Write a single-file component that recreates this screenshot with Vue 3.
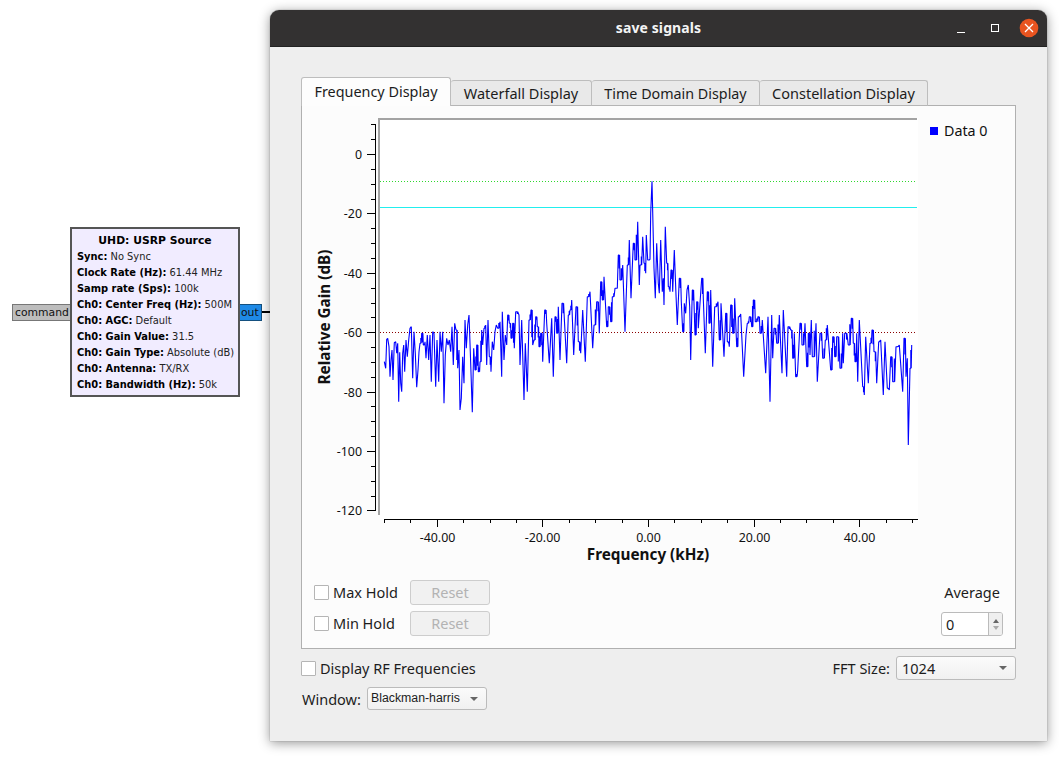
<script setup>
const seg1 = [43,575,47,595,50,508,53,505,57,530,60,620,63,570,66,540,69,630,73,518,77,515,80,550,83,520,86,695,89,547,92,640,95,665,98,550,101,525,104,605,108,510,112,560,116,510,120,475,124,470,128,625,132,485,136,550,140,652,144,600,147,545,150,520,155,490,160,525,165,515,168,565,172,495,176,570,180,495,184,635,188,485,192,490,197,650,201,510,206,635,210,485,214,545,218,485,222,700,226,555,230,505,234,525,238,510,242,545,246,470,250,585,254,460,258,480,263,595,267,540,270,720,274,685,278,560,282,640,285,450,289,535,293,465,297,435,301,545,307,727,311,535,315,600,320,525,325,605,330,575,335,480,338,525,342,475,347,465,350,585,354,450,358,560,363,605,367,515,371,540,375,485,379,465,383,475,390,455,395,620,397,425,402,570,406,495,410,525,413,435,418,460,423,505,428,460,433,535,437,425,447,435,450,585,455,450,462,690,466,520,472,665,477,450,483,420,488,525,492,510,497,440,502,470,507,530,512,490,518,575,524,420,530,460,538,580,545,445,550,620,555,440,560,490,565,410,570,570,576,400,583,445,590,580,595,435,600,420,605,390,611,555,618,410,625,515,632,550,638,420,646,575,652,380,660,365,668,535,672,465,680,395,688,490,692,335,697,390,702,320,710,470,715,410,722,455,727,380,735,355,742,355,745,255,750,330,758,285,765,485,772,285,778,210,783,385,790,220,795,270,803,155,808,345]
const seg2 = [0,285,8,200,12,280,17,310,19,195,23,270,30,268,32,130,36,34,40,205,42,295,46,385,50,220,55,340,58,370,62,210,67,365,70,325,72,405,76,170,80,280,85,350,90,365,93,300,98,365,103,240,108,375,112,465,118,325,124,395,128,485,133,400,137,430,141,360,145,345,149,410,152,570,157,360,162,400,165,495,170,395,175,475,185,325,190,385,196,550,202,365,207,460,212,360,218,590,224,410,234,395,238,510,243,400,252,560,257,430,262,515,268,530,272,405,278,490,284,385,290,530,295,440,302,432,311,620,318,495,322,460,328,440,335,470,340,390,346,455,354,440,360,490,367,450,377,610,384,440,390,695,395,435,398,565,402,475,410,520,418,435,426,610,430,420,440,620,444,470,452,480,458,565,463,490,467,620,473,600,480,460,486,525,495,460,500,590,505,490,510,555,514,450,517,560,528,460,532,635,540,490,548,565,556,510,562,465,572,600,578,500,584,560,590,500,600,595,608,490,610,580,614,490,625,525,634,445,640,520,645,575,650,490,653,635,658,450,668,650,673,675,677,500,685,640,690,520,696,480,702,545,710,640,716,515,722,510,730,675,735,515,742,655,748,660,752,560,758,635,768,530,778,525,788,665,792,505,798,620,802,565,805,825,810,595,815,525]

// Scan-line look: the reference draws roughly one vertical stroke per pixel column.
function toPts(arr, ox) {
  const out = []
  for (let i = 0; i < arr.length; i += 2) {
    const x = ox + arr[i] / 3
    const y = 170 + arr[i + 1] / 3
    out.push(x.toFixed(1) + ',' + y.toFixed(1))
    if (i + 2 < arr.length) {
      const nx = ox + arr[i + 2] / 3
      const ny = 170 + arr[i + 3] / 3
      if (nx - x >= 1.6 && Math.abs(ny - y) < 40) {
        const mid = x + (nx - x) * 0.5
        const f = ((i * 37) % 10) / 10
        const my = y + (ny - y) * (0.3 + 0.6 * f)
        out.push(mid.toFixed(1) + ',' + y.toFixed(1))
        out.push(mid.toFixed(1) + ',' + my.toFixed(1))
        out.push((mid + 0.4).toFixed(1) + ',' + y.toFixed(1))
        out.push(nx.toFixed(1) + ',' + ny.toFixed(1))
      }
    }
  }
  return out
}
const trace = [...toPts(seg1, 370), ...toPts(seg2, 640)].join(' ')

const yOf = db => Math.round(154 - db * 2.97) + 0.5
const xOf = k => Math.round(648 + k * 5.28) + 0.5

const yTicks = []
for (let d = 10; d >= -120; d -= 5) yTicks.push({ y: yOf(d), major: d % 20 === 0 })
const yLabels = [0, -20, -40, -60, -80, -100, -120].map(d => ({ y: yOf(d) + 4.5, t: String(d) }))
const xTicks = []
for (let k = -50; k <= 50; k += 5) xTicks.push({ x: xOf(k), major: k % 20 === 0 })
const xLabels = [-40, -20, 0, 20, 40].map(k => ({ x: xOf(k), t: k.toFixed(2) }))

const props = [
  ['Sync:', 'No Sync'],
  ['Clock Rate (Hz):', '61.44 MHz'],
  ['Samp rate (Sps):', '100k'],
  ['Ch0: Center Freq (Hz):', '500M'],
  ['Ch0: AGC:', 'Default'],
  ['Ch0: Gain Value:', '31.5'],
  ['Ch0: Gain Type:', 'Absolute (dB)'],
  ['Ch0: Antenna:', 'TX/RX'],
  ['Ch0: Bandwidth (Hz):', '50k'],
]
const tabs = ['Frequency Display', 'Waterfall Display', 'Time Domain Display', 'Constellation Display']
</script>

<template>
  <div class="desk">
    <div class="node">
      <div class="port cmd">command</div>
      <div class="block">
        <div class="block-title">UHD: USRP Source</div>
        <div v-for="p in props" :key="p[0]" class="prop"><b>{{ p[0] }}</b> {{ p[1] }}</div>
      </div>
      <div class="port out">out</div>
      <div class="wire"></div>
    </div>

    <div class="window">
      <div class="titlebar">
        <span class="title">save signals</span>
        <div class="ctrls">
          <svg width="90" height="24" viewBox="0 0 90 24">
            <path d="M1 16.5h8" stroke="#fff" stroke-width="1" fill="none" />
            <rect x="35.5" y="8.5" width="7" height="7" stroke="#fff" fill="none" />
            <circle cx="73" cy="12" r="9.3" fill="#e95420" />
            <path d="M69 8l8 8M77 8l-8 8" stroke="#fff" stroke-width="1.3" fill="none" />
          </svg>
        </div>
      </div>

      <div class="body">
        <div class="tabbar">
          <div v-for="(t, i) in tabs" :key="t" class="tab" :class="['t' + i, { active: i === 0 }]">{{ t }}</div>
        </div>
        <div class="pane">
          <svg class="plot" width="712" height="468" viewBox="302 106 712 468">
            <rect x="380" y="118" width="538" height="402" fill="#fff" />
            <rect x="378" y="118" width="2" height="397" fill="#a3a3a3" />
            <rect x="378" y="118" width="539" height="2" fill="#a3a3a3" />
            <g shape-rendering="crispEdges" stroke="#000" stroke-width="1">
              <line x1="375.5" y1="124" x2="375.5" y2="511" />
              <line v-for="t in yTicks" :key="'y' + t.y" :x1="t.major ? 367 : 371" :x2="375" :y1="t.y" :y2="t.y" />
              <line x1="384" y1="519.5" x2="918" y2="519.5" />
              <line v-for="t in xTicks" :key="'x' + t.x" :x1="t.x" :x2="t.x" y1="520" :y2="t.major ? 527 : 523" />
            </g>
            <line x1="380" x2="915" y1="181.5" y2="181.5" stroke="#2fd82f" stroke-dasharray="1 2" shape-rendering="crispEdges" />
            <line x1="380" x2="917" y1="207.5" y2="207.5" stroke="#22eeee" shape-rendering="crispEdges" />
            <line x1="380" x2="915" y1="332.5" y2="332.5" stroke="#8b0000" stroke-dasharray="1 2" shape-rendering="crispEdges" />
            <polyline :points="trace" fill="none" stroke="#0000ff" stroke-width="1.1" stroke-linejoin="bevel" />
            <text v-for="l in yLabels" :key="l.t" class="tick" x="362" :y="l.y" text-anchor="end">{{ l.t }}</text>
            <text v-for="l in xLabels" :key="l.t" class="tick" :x="l.x" y="541.5" text-anchor="middle">{{ l.t }}</text>
            <text class="axis" x="648" y="560" text-anchor="middle">Frequency (kHz)</text>
            <text class="axis" transform="translate(330 317) rotate(-90)" text-anchor="middle">Relative Gain (dB)</text>
            <rect x="930" y="127" width="8" height="8" fill="#0000ff" />
            <text class="legend" x="944" y="136">Data 0</text>
          </svg>

          <div class="controls">
            <div class="holds">
              <div class="hold"><span class="check"></span><span class="hold-label">Max Hold</span><span class="reset">Reset</span></div>
              <div class="hold"><span class="check"></span><span class="hold-label">Min Hold</span><span class="reset">Reset</span></div>
            </div>
            <div class="avg">
              <div class="avg-label">Average</div>
              <div class="spin">
                <span class="spin-val">0</span>
                <span class="spin-btns"><i class="up"></i><i class="down"></i></span>
              </div>
            </div>
          </div>
        </div>

        <div class="row rf">
          <span class="rf-left"><span class="check"></span><span>Display RF Frequencies</span></span>
          <span class="fft">
            <span>FFT Size:</span>
            <span class="combo big">1024<i class="arrow"></i></span>
          </span>
        </div>
        <div class="row win">
          <span class="win-label">Window:</span>
          <span class="combo small">Blackman-harris<i class="arrow"></i></span>
        </div>
      </div>
    </div>
  </div>
</template>

<style>
html, body { margin: 0; background: #fff; }
</style>

<style scoped>
.desk {
  position: relative;
  width: 1059px;
  height: 759px;
  overflow: hidden;
  background: #fff;
  font-family: "Noto Sans", "Open Sans", sans-serif;
  color: #1c1c1c;
}
.node {
  position: absolute;
  left: 12px;
  top: 227px;
  display: flex;
  align-items: center;
  font-family: "DejaVu Sans", sans-serif;
}
.block {
  width: 170px;
  height: 170px;
  box-sizing: border-box;
  border: 2px solid #555;
  background: #f1ecff;
  padding: 4px 0 0 5px;
  font-size: 9.9px;
  line-height: 16px;
  color: #222;
  white-space: nowrap;
}
.block b { color: #000; }
.block-title {
  font-weight: bold;
  text-align: center;
  padding-right: 5px;
  color: #000;
  font-size: 10.8px;
}
.port {
  height: 17px;
  box-sizing: border-box;
  font-size: 10.8px;
  line-height: 15px;
  color: #111;
  border: 1px solid #777;
}
.cmd { width: 58px; background: #bdbdbd; padding-left: 2px; border-right: 0; }
.out { width: 22px; background: #1f8ae6; padding-left: 1px; border-left: 0; border-color: #14507f; }
.wire { width: 10px; height: 2px; background: #000; }

.window {
  position: absolute;
  left: 270px;
  top: 10px;
  width: 777px;
  height: 731px;
  box-sizing: border-box;
  background: #eeeeee;
  border-radius: 9px 9px 0 0;
  box-shadow: 0 2px 12px rgba(0, 0, 0, 0.42), 0 0 1px rgba(0, 0, 0, 0.6);
  display: flex;
  flex-direction: column;
}
.titlebar {
  position: relative;
  height: 37px;
  flex: none;
  background: #333131;
  border-radius: 9px 9px 0 0;
  border-bottom: 1px solid #222;
  box-sizing: border-box;
  display: flex;
  align-items: center;
  justify-content: center;
}
.title {
  color: #f4f4f4;
  font-weight: 700;
  font-size: 14px;
  letter-spacing: 0.1px;
  padding-bottom: 2px;
}
.ctrls {
  position: absolute;
  right: 1px;
  top: 6px;
  height: 24px;
}
.body {
  padding: 31px 31px 0 31px;
  display: flex;
  flex-direction: column;
}
.tabbar {
  display: flex;
  align-items: flex-end;
  height: 28px;
  position: relative;
  z-index: 1;
  margin-bottom: -1px;
}
.tab {
  box-sizing: border-box;
  height: 26px;
  background: #e9e9e9;
  border: 1px solid #bdbdbd;
  border-bottom: 1px solid #b5b5b5;
  border-left: 0;
  border-radius: 3px 3px 0 0;
  font-size: 14.5px;
  line-height: 25px;
  text-align: center;
  white-space: nowrap;
  color: #1c1c1c;
}
.t0 { width: 150px; font-size: 14.4px; }
.t1 { width: 141px; }
.t2 { width: 168px; font-size: 14.3px; }
.t3 { width: 168px; }
.tab.active {
  height: 29px;
  background: #fdfdfd;
  border-left: 1px solid #bdbdbd;
  border-bottom: 0;
  line-height: 28px;
  position: relative;
}
.pane {
  box-sizing: border-box;
  width: 715px;
  height: 544px;
  background: #fcfcfc;
  border: 1px solid #b0b0b0;
  display: flex;
  flex-direction: column;
}
.plot { display: block; flex: none; }
.tick { font-size: 12.4px; fill: #111; font-family: "Noto Sans", sans-serif; }
.axis { font-size: 15.3px; font-weight: 700; fill: #111; font-family: "Noto Sans", sans-serif; }
.legend { font-size: 14.3px; fill: #111; font-family: "Noto Sans", sans-serif; }

.controls {
  display: flex;
  justify-content: space-between;
  padding: 6px 12px 0 12px;
  font-size: 14.5px;
}
.holds { display: flex; flex-direction: column; gap: 6px; }
.hold { display: flex; align-items: center; height: 25px; }
.hold-label { width: 77px; padding-bottom: 2px; }
.check {
  width: 13px;
  height: 13px;
  flex: none;
  border: 1px solid #b5b5b5;
  border-radius: 1px;
  background: #fff;
  margin-right: 4px;
}
.reset {
  box-sizing: border-box;
  width: 80px;
  height: 25px;
  line-height: 22px;
  text-align: center;
  border: 1px solid #cdcdcd;
  border-radius: 3px;
  background: #f1f1f1;
  color: #b3b3b3;
}
.avg { display: flex; flex-direction: column; align-items: flex-end; width: 62px; margin-top: 1px; }
.avg-label { align-self: center; line-height: 22px; margin-bottom: 9px; white-space: nowrap; }
.spin {
  box-sizing: border-box;
  width: 62px;
  height: 24px;
  border: 1px solid #bbb;
  border-radius: 3px;
  background: #fff;
  display: flex;
  justify-content: space-between;
}
.spin-val { padding-left: 4px; line-height: 22px; }
.spin-btns {
  width: 13px;
  background: #efefef;
  border-left: 1px solid #bbb;
  border-radius: 0 2px 2px 0;
  display: flex;
  flex-direction: column;
  align-items: center;
  justify-content: center;
  gap: 3px;
}
.up, .down { width: 0; height: 0; border-left: 3.5px solid transparent; border-right: 3.5px solid transparent; }
.up { border-bottom: 4px solid #666; }
.down { border-top: 4px solid #aaa; }

.row { display: flex; align-items: center; font-size: 14.5px; }
.rf { justify-content: space-between; height: 24px; margin-top: 7px; }
.rf-left { display: flex; align-items: center; }
.rf-left .check { margin-right: 4px; }
.fft { display: flex; align-items: center; gap: 6px; }
.win { margin-top: 7px; gap: 6px; height: 23px; }
.win-label { margin-left: 1px; width: 59px; }
.combo {
  box-sizing: border-box;
  position: relative;
  display: block;
  border: 1px solid #bbb;
  border-radius: 3px;
  background: linear-gradient(#fbfbfb, #f0f0f0);
  white-space: nowrap;
}
.big { width: 120px; height: 24px; line-height: 23px; padding-left: 5px; }
.small { width: 120px; height: 23px; line-height: 21px; padding-left: 3px; font-size: 12.3px; font-family: "Liberation Sans", sans-serif; }
.arrow {
  position: absolute;
  right: 8px;
  top: 9px;
  width: 0;
  height: 0;
  border-left: 4px solid transparent;
  border-right: 4px solid transparent;
  border-top: 4px solid #666;
}
</style>
